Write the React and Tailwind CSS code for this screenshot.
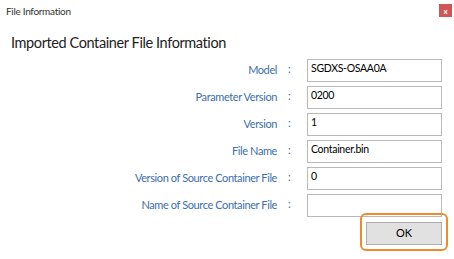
export default function App() {
    const rows = [
        { label: 'Model', value: 'SGDXS-OSAA0A' },
        { label: 'Parameter Version', value: '0200' },
        { label: 'Version', value: '1' },
        { label: 'File Name', value: 'Container.bin' },
        { label: 'Version of Source Container File', value: '0' },
        { label: 'Name of Source Container File', value: '' },
    ];

    return (
        <div className="w-[454px] h-[259px] bg-white overflow-hidden" style={{ fontFamily: 'Lato, "Open Sans", sans-serif' }}>
            {/* Title bar */}
            <div className="flex items-start justify-between h-[22px]">
                <span className="ml-[6px] mt-[4px] text-[10px] tracking-[-0.3px] leading-[14px] text-[#333]">File Information</span>
                <div className="mt-[4px] mr-[2px] w-[13px] h-[13px] bg-[#d25555] flex items-center justify-center text-white text-[8px] leading-none font-bold">x</div>
            </div>

            {/* Heading */}
            <h1 className="ml-[11px] mt-[11px] text-[14.5px] tracking-[-0.4px] leading-[20px] text-[#222]">Imported Container File Information</h1>

            {/* Fields */}
            <div className="mt-[6px] flex flex-col gap-[4px]">
                {rows.map((row) => (
                    <div key={row.label} className="flex items-start h-[23px]">
                        <span className="w-[277px] text-right text-[11px] tracking-[-0.4px] leading-[15px] mt-[3px] text-[#3b6fae] whitespace-nowrap">{row.label}</span>
                        <span className="w-[30px] pl-[11px] text-[11px] leading-[15px] mt-[2px] text-[#3b6fae]">:</span>
                        <div className="w-[135px] h-[23px] border border-[#b9b9b9] px-[3px] pt-[1px] text-[10.5px] tracking-[-0.3px] leading-[14px] text-black">{row.value}</div>
                    </div>
                ))}
            </div>

            {/* OK button */}
            <div className="flex justify-end mr-[6px] mt-[-4px]">
                <div className="rounded-[6px] border-2 border-[#f08a2c] p-[4px]">
                    <button className="w-[76px] h-[23px] bg-[#e1e1e1] border border-[#adadad] text-[11px] text-black">OK</button>
                </div>
            </div>
        </div>
    );
}
